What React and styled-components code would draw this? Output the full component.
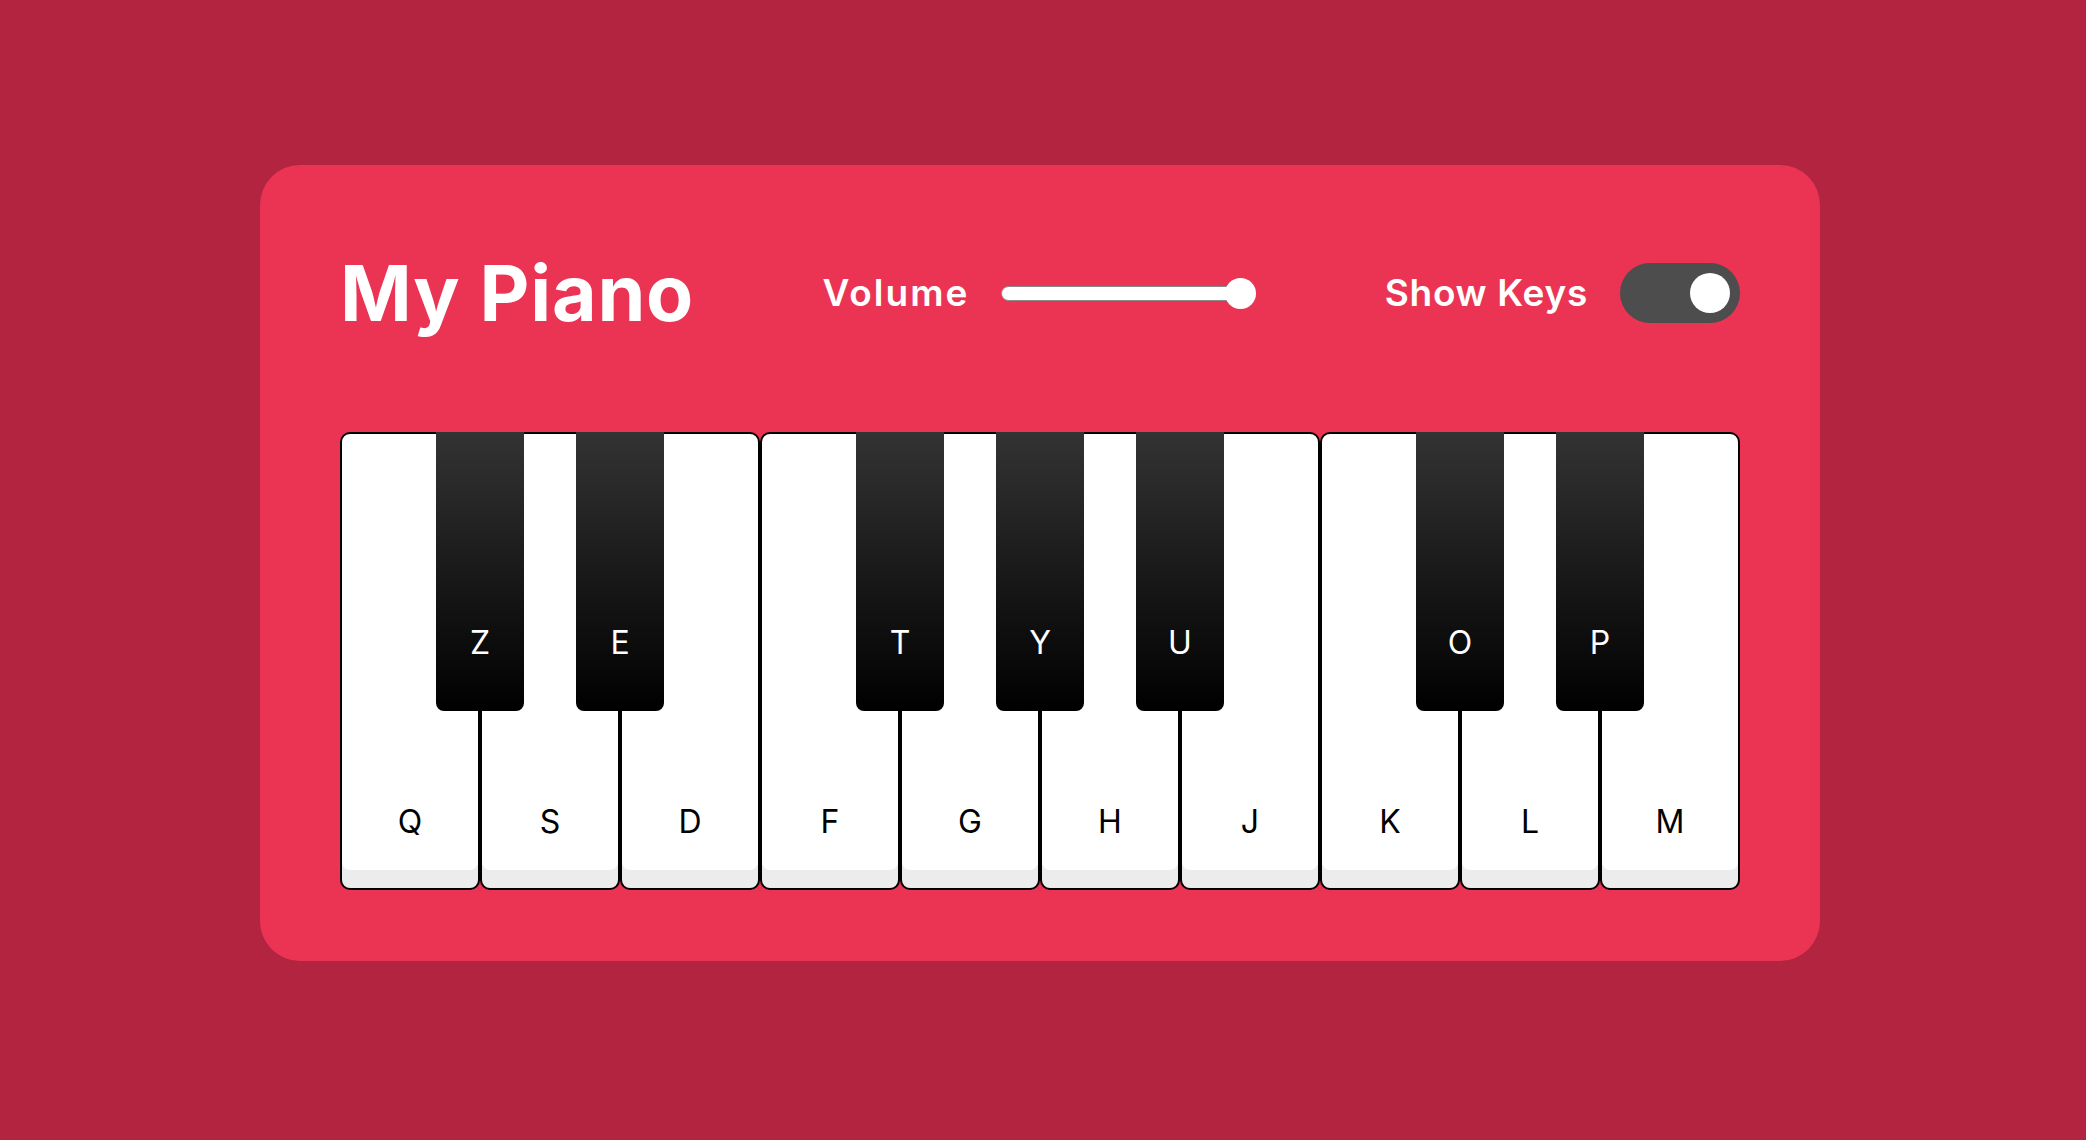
import React from "react";
import styled, { createGlobalStyle } from "styled-components";

const GlobalStyle = createGlobalStyle`
  html, body {
    margin: 0;
    padding: 0;
    background: #b2243f;
  }
  * {
    box-sizing: border-box;
  }
`;

const Page = styled.div`
  width: 2086px;
  height: 1140px;
  padding: 165px 0 0 260px;
  background: #b2243f;
  font-family: Inter, "Liberation Sans", sans-serif;
`;

const Card = styled.div`
  width: 1560px;
  height: 796px;
  padding: 98px 80px 0 80px;
  background: #eb3453;
  border-radius: 40px;
  display: flex;
  flex-direction: column;
  gap: 109px;
`;

const Header = styled.div`
  height: 60px;
  display: flex;
  align-items: center;
  justify-content: space-between;
`;

const Title = styled.h1`
  margin: 0;
  font-size: 77px;
  line-height: 60px;
  font-weight: 700;
  color: #fff;
  letter-spacing: 0.8px;
`;

const Control = styled.div`
  display: flex;
  align-items: center;
  gap: 32px;
`;

const Label = styled.span`
  font-size: 37px;
  font-weight: 600;
  color: #fff;
  line-height: 60px;
  letter-spacing: ${(p) => p.$spacing || "0.5px"};
`;

const Slider = styled.div`
  position: relative;
  width: 255px;
  height: 31px;
  flex-shrink: 0;
`;

const Track = styled.div`
  position: absolute;
  left: 0;
  right: 4px;
  top: 8px;
  height: 15px;
  background: #fff;
  border: 1px solid #8a8a8a;
  border-radius: 8px;
`;

const Thumb = styled.div`
  position: absolute;
  right: 0;
  top: 0;
  width: 31px;
  height: 31px;
  border-radius: 50%;
  background: #fff;
`;

const Toggle = styled.div`
  width: 120px;
  height: 60px;
  border-radius: 30px;
  background: #4d4d4d;
  display: flex;
  align-items: center;
  justify-content: ${(p) => (p.$on ? "flex-end" : "flex-start")};
  padding: 0 10px;
`;

const Knob = styled.div`
  width: 40px;
  height: 40px;
  border-radius: 50%;
  background: #fff;
`;

const Keyboard = styled.div`
  position: relative;
  display: flex;
  width: 1400px;
  height: 458px;
`;

const WhiteKey = styled.div`
  width: 140px;
  height: 100%;
  background: #fff;
  border: 2px solid #000;
  border-radius: 10px;
  box-shadow: inset 0 -18px 0 #ececec;
  display: flex;
  align-items: flex-end;
  justify-content: center;
  padding-bottom: 46px;
`;

const BlackKey = styled.div`
  position: absolute;
  top: 0;
  width: 88px;
  height: 279px;
  background: linear-gradient(to bottom, #333333, #000000);
  border-radius: 0 0 8px 8px;
  display: flex;
  align-items: flex-end;
  justify-content: center;
  padding-bottom: 48px;
`;

const KeyLabel = styled.span`
  font-size: 32px;
  line-height: 40px;
  font-weight: 400;
  color: ${(p) => (p.$light ? "#fff" : "#000")};
`;

const whites = ["Q", "S", "D", "F", "G", "H", "J", "K", "L", "M"];
const blacks = [
  { key: "Z", at: 1 },
  { key: "E", at: 2 },
  { key: "T", at: 4 },
  { key: "Y", at: 5 },
  { key: "U", at: 6 },
  { key: "O", at: 8 },
  { key: "P", at: 9 },
];

function App() {
  return (
    <Page>
      <GlobalStyle />
      <Card>
        <Header>
          <Title>My Piano</Title>
          <Control>
            <Label $spacing="2px">Volume</Label>
            <Slider>
              <Track />
              <Thumb />
            </Slider>
          </Control>
          <Control>
            <Label $spacing="0.7px">Show Keys</Label>
            <Toggle $on>
              <Knob />
            </Toggle>
          </Control>
        </Header>
        <Keyboard>
          {whites.map((k) => (
            <WhiteKey key={k}>
              <KeyLabel>{k}</KeyLabel>
            </WhiteKey>
          ))}
          {blacks.map((b) => (
            <BlackKey key={b.key} style={{ left: b.at * 140 - 44 }}>
              <KeyLabel $light>{b.key}</KeyLabel>
            </BlackKey>
          ))}
        </Keyboard>
      </Card>
    </Page>
  );
}

export default App;
